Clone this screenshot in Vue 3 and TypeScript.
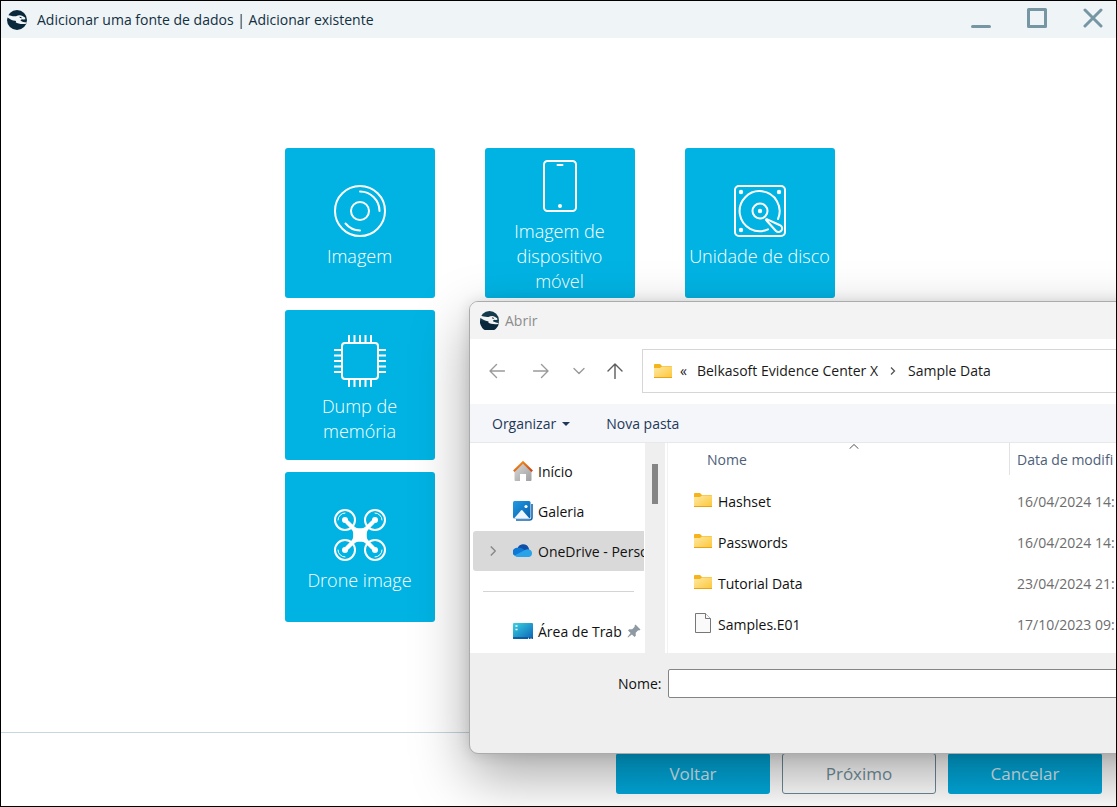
<script setup lang="ts">
import { ref } from 'vue'

interface Tile {
  id: string
  label: string
  col: number
  row: number
}

interface FileEntry {
  name: string
  date: string
  kind: 'folder' | 'file'
}

const tiles: Tile[] = [
  { id: 'image', label: 'Imagem', col: 1, row: 1 },
  { id: 'mobile', label: 'Imagem de\ndispositivo\nmóvel', col: 2, row: 1 },
  { id: 'disk', label: 'Unidade de disco', col: 3, row: 1 },
  { id: 'memory', label: 'Dump de\nmemória', col: 1, row: 2 },
  { id: 'drone', label: 'Drone image', col: 1, row: 3 },
]

const files: FileEntry[] = [
  { name: 'Hashset', date: '16/04/2024 14:', kind: 'folder' },
  { name: 'Passwords', date: '16/04/2024 14:', kind: 'folder' },
  { name: 'Tutorial Data', date: '23/04/2024 21:', kind: 'folder' },
  { name: 'Samples.E01', date: '17/10/2023 09:', kind: 'file' },
]

const fileName = ref('')
const pins = [0, 1, 2, 3, 4]
const rotors = [
  { x: 11, y: 11 },
  { x: 41, y: 11 },
  { x: 11, y: 41 },
  { x: 41, y: 41 },
]
</script>

<template>
  <div class="window">
    <header class="titlebar">
      <svg class="logo" viewBox="0 0 20 20" aria-hidden="true">
        <circle cx="10" cy="10" r="10" fill="#0a283c" />
        <path d="M0 5C3 5.400 6 6.600 9 6.200C11 5.300 13.500 4.900 15.500 6L18 7.600L18.400 9.200L16.600 9.600L14.800 9.200L13.400 10.400C14.600 11.800 17.400 12 19.800 12.600L19.200 13.800C15 14.400 10.600 13.800 8.600 12.200C9.400 11.600 9.200 11 8.200 10.800C5.400 10.600 3 9 0 7.200Z" fill="#f0f5f8" />
        <path d="M12.600 7.200l2 .6" stroke="#0a283c" stroke-width="1" />
      </svg>
      <h1 class="title">Adicionar uma fonte de dados | Adicionar existente</h1>
      <div class="controls">
        <button type="button" class="control" aria-label="Minimizar">
          <svg viewBox="0 0 20 20"><path d="M1.500 18.500h17" /></svg>
        </button>
        <button type="button" class="control" aria-label="Maximizar">
          <svg viewBox="0 0 20 20"><rect x="1.500" y="1.500" width="17" height="17" /></svg>
        </button>
        <button type="button" class="control" aria-label="Fechar">
          <svg viewBox="0 0 20 20"><path d="M2 2l16 16M18 2L2 18" /></svg>
        </button>
      </div>
    </header>

    <main class="content">
      <div class="tiles">
        <button
          v-for="tile in tiles"
          :key="tile.id"
          type="button"
          class="tile"
          :class="[`col-${tile.col}`, `row-${tile.row}`]"
        >
          <svg class="tile-icon" viewBox="0 0 52 52" aria-hidden="true">
            <g v-if="tile.id === 'image'" class="line">
              <circle cx="26" cy="26" r="25" />
              <circle cx="26" cy="26" r="9" />
              <path d="M26 6.500A19.500 19.500 0 0 1 45.500 26M26 45.500A19.500 19.500 0 0 1 11.500 38.500" />
            </g>
            <g v-else-if="tile.id === 'mobile'" class="line">
              <rect x="10" y="1" width="32" height="50" rx="3.500" />
              <path d="M23.500 5h5" />
              <circle cx="26" cy="46" r="2" class="solid" />
            </g>
            <g v-else-if="tile.id === 'disk'" class="line">
              <rect x="1" y="1" width="50" height="50" rx="4" />
              <path d="M44 34A20 20 0 1 0 34 44.300" />
              <circle cx="26" cy="26" r="7.500" />
              <circle cx="26" cy="26" r="2.200" class="solid" />
              <path d="M32.500 35.500C31.500 34.800 32 34 33.200 34.300L45.500 40A3.600 3.600 0 1 1 42 46Z" />
              <circle cx="7" cy="7" r="2.200" class="solid" />
              <circle cx="45" cy="7" r="2.200" class="solid" />
              <circle cx="7" cy="45" r="2.200" class="solid" />
            </g>
            <g v-else-if="tile.id === 'memory'" class="line flat">
              <rect x="8" y="8" width="36" height="36" rx="3" />
              <path v-for="p in pins" :key="p" :d="`M${15 + p * 5.5} 0v8M${15 + p * 5.5} 44v8M0 ${15 + p * 5.5}h8M44 ${15 + p * 5.5}h8`" />
            </g>
            <g v-else class="line">
              <g v-for="r in rotors" :key="`${r.x}-${r.y}`">
                <circle :cx="r.x" :cy="r.y" r="10" />
                <circle :cx="r.x" :cy="r.y" r="3" class="solid" />
              </g>
              <path class="thin" d="M4 11A7 7 0 0 1 11 4M48 11A7 7 0 0 0 41 4M4 41A7 7 0 0 0 11 48M48 41A7 7 0 0 1 41 48" />
              <path class="arms" d="M11 11L41 41M41 11L11 41" />
              <path class="fill" d="M15 12.500L20.500 18C22.500 19.800 29.500 19.800 31.500 18L37 12.500L39.500 15L34 20.500C32.400 22.500 32.400 29.500 34 31.500L39.500 37L37 39.500L31.500 34C29.500 32.400 22.500 32.400 20.500 34L15 39.500L12.500 37L18 31.500C19.600 29.500 19.600 22.500 18 20.500L12.500 15Z" />
            </g>
          </svg>
          <span class="tile-label">{{ tile.label }}</span>
        </button>
      </div>
    </main>

    <footer class="footer">
      <button type="button" class="action">Voltar</button>
      <button type="button" class="action outline">Próximo</button>
      <button type="button" class="action">Cancelar</button>
    </footer>

    <section class="dialog" role="dialog" aria-labelledby="dialog-title">
      <header class="dialog-title">
        <svg class="logo" viewBox="0 0 20 20" aria-hidden="true">
          <circle cx="10" cy="10" r="10" fill="#123a4c" />
          <path d="M0 10.500A10 10 0 0 0 20 12Z" fill="#0a283c" />
          <path d="M0 5C3 5.400 6 6.600 9 6.200C11 5.300 13.500 4.900 15.500 6L18 7.600L18.400 9.200L16.600 9.600L14.800 9.200L13.400 10.400C14.600 11.800 17.400 12 19.800 12.600L19.200 13.800C15 14.400 10.600 13.800 8.600 12.200C9.400 11.600 9.200 11 8.200 10.800C5.400 10.600 3 9 0 7.200Z" fill="#f3f3f3" />
          <path d="M12.600 7.200l2 .6" stroke="#0a283c" stroke-width="1" />
        </svg>
        <h2 id="dialog-title">Abrir</h2>
      </header>

      <nav class="navbar">
        <button type="button" class="nav-btn" aria-label="Voltar">
          <svg viewBox="0 0 16 16"><path d="M15.500 8H1M7.500 1.500L1 8l6.500 6.500" /></svg>
        </button>
        <button type="button" class="nav-btn forward" aria-label="Avançar">
          <svg viewBox="0 0 16 16"><path d="M.5 8H15M8.500 1.500L15 8l-6.500 6.500" /></svg>
        </button>
        <button type="button" class="nav-btn recent" aria-label="Locais recentes">
          <svg viewBox="0 0 16 16"><path d="M3 5.500L8 10.500l5-5" /></svg>
        </button>
        <button type="button" class="nav-btn up" aria-label="Acima">
          <svg viewBox="0 0 16 16"><path d="M8 15.500V1M1 8l7-7 7 7" /></svg>
        </button>
        <div class="address">
          <svg class="folder" viewBox="0 0 18 14" aria-hidden="true">
            <defs>
              <linearGradient id="folder-fill" x1="0" y1="0" x2="1" y2="1">
                <stop offset="0" stop-color="#ffe9a6" />
                <stop offset="1" stop-color="#fcc737" />
              </linearGradient>
            </defs>
            <path d="M0 1a1 1 0 0 1 1-1h5l2 2h9a1 1 0 0 1 1 1v3H0z" fill="#f5b41d" />
            <path d="M0 4h6l2-1.500h10V13a1 1 0 0 1-1 1H1a1 1 0 0 1-1-1z" fill="url(#folder-fill)" />
            <path d="M0 13.500h18" stroke="#e8a318" />
          </svg>
          <span class="chevrons">«</span>
          <a href="#" class="crumb">Belkasoft Evidence Center X</a>
          <svg class="crumb-sep" viewBox="0 0 6 8" aria-hidden="true"><path d="M1 .5L4.500 4L1 7.500" /></svg>
          <a href="#" class="crumb">Sample Data</a>
        </div>
      </nav>

      <div class="toolbar">
        <button type="button" class="tool">
          Organizar
          <svg class="caret" viewBox="0 0 8 4" aria-hidden="true"><path d="M0 0h8L4 4z" /></svg>
        </button>
        <button type="button" class="tool">Nova pasta</button>
      </div>

      <div class="browser">
        <ul class="places">
          <li>
            <button type="button" class="place">
              <svg class="place-icon" viewBox="0 0 20 20" aria-hidden="true">
                <defs>
                  <linearGradient id="roof" x1="0" y1="0" x2="1" y2="1">
                    <stop offset="0" stop-color="#f79a1c" />
                    <stop offset="1" stop-color="#cf3f12" />
                  </linearGradient>
                  <linearGradient id="wall" x1="0" y1="0" x2="1" y2="1">
                    <stop offset="0" stop-color="#d9d9d9" />
                    <stop offset="1" stop-color="#9f9f9f" />
                  </linearGradient>
                </defs>
                <path d="M1.500 9.500L10 2l8.500 7.500V19a1 1 0 0 1-1 1H13v-7H7v7H2.500a1 1 0 0 1-1-1z" fill="url(#wall)" />
                <path d="M.8 10.200L10 1.300l9.200 8.900" fill="none" stroke="url(#roof)" stroke-width="2.200" />
              </svg>
              <span class="place-name">Início</span>
            </button>
          </li>
          <li>
            <button type="button" class="place">
              <svg class="place-icon" viewBox="0 0 20 20" aria-hidden="true">
                <defs>
                  <linearGradient id="photo" x1="0" y1="0" x2="1" y2="1">
                    <stop offset="0" stop-color="#1f9be4" />
                    <stop offset="1" stop-color="#0a5ea8" />
                  </linearGradient>
                </defs>
                <path d="M3 19h13.500a2.500 2.500 0 0 0 2.500-2.500V3" fill="none" stroke="#1768b0" stroke-width="1.600" />
                <rect width="17.500" height="17.500" rx="1.500" fill="url(#photo)" />
                <path d="M1 17.500L8 9.500a1 1 0 0 1 1.500 0L16.500 17.500z" fill="#eef7ff" />
                <circle cx="13" cy="5.500" r="1.600" fill="#fff" />
              </svg>
              <span class="place-name">Galeria</span>
            </button>
          </li>
          <li>
            <button type="button" class="place selected">
              <svg class="expand" viewBox="0 0 6 10" aria-hidden="true"><path d="M.8.5L5.300 5L.8 9.500" /></svg>
              <svg class="place-icon" viewBox="0 0 20 20" aria-hidden="true">
                <path d="M4.500 7.500a6 6 0 0 1 11-1l1 3L10 13z" fill="#0f4fa8" />
                <path d="M3.500 15.500A4.300 4.300 0 0 1 4.500 6.800c2-.4 4 .2 5.500 1.200l6 4z" fill="#0f78d4" />
                <path d="M1.500 14.500L12 9a5.500 5.500 0 0 1 4-.6 3.900 3.900 0 0 1 0 7.600H5a5 5 0 0 1-3.500-1.500z" fill="#28a3ea" />
              </svg>
              <span class="place-name">OneDrive - Perso</span>
            </button>
          </li>
          <li class="separator" role="separator"></li>
          <li>
            <button type="button" class="place">
              <svg class="place-icon" viewBox="0 0 20 20" aria-hidden="true">
                <defs>
                  <linearGradient id="desk" x1="0" y1="0" x2="1" y2="1">
                    <stop offset="0" stop-color="#38d3e0" />
                    <stop offset="1" stop-color="#0b63b8" />
                  </linearGradient>
                </defs>
                <rect y="2" width="20" height="16" rx="1" fill="url(#desk)" />
                <path d="M2.500 5h2M2.500 8.500h2" stroke="#fff" stroke-width="1.600" />
                <path d="M0 17h20" stroke="#0a4f92" stroke-width="1.500" />
                <path d="M15 17.300h1M17.500 17.300h1" stroke="#fff" />
              </svg>
              <span class="place-name">Área de Trab</span>
              <svg class="pin" viewBox="0 0 14 14" aria-hidden="true">
                <path d="M8.500.5l5 5-1.300 1-1-.2-2.500 2.500.1 3-1.300 1.200-2.600-2.600L1 13.500.5 13l3.100-3.900L1 6.500l1.200-1.300 3 .1 2.500-2.500-.2-1z" />
              </svg>
            </button>
          </li>
        </ul>
        <div class="scrollbar"><div class="thumb"></div></div>
        <div class="files">
          <table>
            <thead>
              <tr>
                <th scope="col" class="name-col">
                  Nome
                  <svg class="sort" viewBox="0 0 10 5" aria-hidden="true"><path d="M.5 4.800L5 .5l4.500 4.300" /></svg>
                </th>
                <th scope="col" class="date-col"><span>Data de modifi</span></th>
              </tr>
            </thead>
            <tbody>
              <tr v-for="file in files" :key="file.name">
                <td>
                  <div class="file">
                    <svg v-if="file.kind === 'folder'" class="folder" viewBox="0 0 18 14" aria-hidden="true">
                      <path d="M0 1a1 1 0 0 1 1-1h5l2 2h9a1 1 0 0 1 1 1v3H0z" fill="#f5b41d" />
                      <path d="M0 4h6l2-1.500h10V13a1 1 0 0 1-1 1H1a1 1 0 0 1-1-1z" fill="url(#folder-fill)" />
                      <path d="M0 13.500h18" stroke="#e8a318" />
                    </svg>
                    <svg v-else class="doc" viewBox="0 0 18 20" aria-hidden="true">
                      <path d="M1.500.5h10l5 5v14h-15z" />
                      <path d="M11.500.5v5h5" />
                    </svg>
                    <span>{{ file.name }}</span>
                  </div>
                </td>
                <td class="date">{{ file.date }}</td>
              </tr>
            </tbody>
          </table>
        </div>
      </div>

      <div class="name-row">
        <label for="file-name">Nome:</label>
        <input id="file-name" v-model="fileName" type="text" />
      </div>
    </section>
  </div>
</template>

<style>
body {
  margin: 0;
}
</style>

<style scoped>
* {
  box-sizing: border-box;
}

.window {
  position: relative;
  display: flex;
  flex-direction: column;
  min-height: 100vh;
  overflow: hidden;
  border: 1px solid #000;
  background: #fff;
  font-family: "Open Sans", "Noto Sans", sans-serif;
  font-size: 14px;
  line-height: 20px;
  color: #1a1a1a;
}

button {
  margin: 0;
  padding: 0;
  border: 0;
  background: none;
  font: inherit;
  color: inherit;
}

h1,
h2 {
  margin: 0;
  font-size: 14px;
  font-weight: 400;
}

svg {
  display: block;
  flex: none;
}

.titlebar {
  display: flex;
  align-items: center;
  gap: 10px;
  height: 37px;
  padding: 0 13px 0 6px;
  background: #eff4f7;
}

.logo {
  width: 20px;
  height: 20px;
}

.title {
  flex: 1;
  color: #12303f;
}

.controls {
  display: flex;
  gap: 36px;
  padding-bottom: 4px;
}

.control svg {
  width: 20px;
  height: 20px;
  fill: none;
  stroke: #7796a3;
  stroke-width: 3;
  stroke-linecap: round;
  stroke-linejoin: round;
}

.content {
  flex: 1;
  padding: 110px 0 0 2px;
}

.tiles {
  display: grid;
  grid-template-columns: repeat(3, 150px);
  grid-auto-rows: 150px;
  gap: 12px 50px;
  justify-content: center;
}

.tile {
  display: flex;
  flex-direction: column;
  align-items: center;
  justify-content: center;
  gap: 7px;
  padding-top: 8px;
  border-radius: 3px;
  background: #00b3e3;
  color: #fff;
  font-size: 18px;
  font-weight: 300;
  line-height: 25px;
}

.tile-label {
  white-space: pre-line;
}

.col-1 { grid-column: 1; }
.col-2 { grid-column: 2; }
.col-3 { grid-column: 3; }
.row-1 { grid-row: 1; }
.row-2 { grid-row: 2; }
.row-3 { grid-row: 3; }

.tile-icon {
  width: 52px;
  height: 52px;
}

.line {
  fill: none;
  stroke: #fff;
  stroke-width: 2;
  stroke-linecap: round;
  stroke-linejoin: round;
}

.flat {
  stroke-linecap: butt;
}

.solid,
.fill {
  fill: #fff;
  stroke: none;
}

.line .thin {
  stroke-width: 1;
}

.line .arms {
  stroke-width: 4;
}

.footer {
  display: flex;
  justify-content: flex-end;
  gap: 12px;
  padding: 20px 14px 12px;
  border-top: 1px solid #c5d6de;
}

.action {
  width: 154px;
  height: 41px;
  border-radius: 3px;
  background: #00a9dc;
  color: #dcebf2;
  font-size: 17px;
}

.outline {
  border: 1px solid #6c8a97;
  background: transparent;
  color: #73909c;
}

.dialog {
  position: absolute;
  top: 300px;
  left: 468px;
  right: -60px;
  overflow: hidden;
  border: 1px solid #a9abac;
  border-radius: 9px;
  background: #efefef;
  box-shadow: 0 22px 56px rgba(0, 0, 0, 0.34), 0 1px 14px rgba(0, 0, 0, 0.12);
}

.dialog-title {
  display: flex;
  align-items: center;
  gap: 6px;
  height: 37px;
  padding-left: 10px;
  background: #f3f3f3;
  color: #8c8c8c;
}

.dialog-title .logo {
  width: 19px;
  height: 19px;
}

.navbar {
  display: flex;
  align-items: center;
  height: 65px;
  padding: 0 0 2px 19px;
  background: #fff;
}

.nav-btn svg {
  width: 16px;
  height: 16px;
  fill: none;
  stroke: #9a9a9a;
  stroke-width: 1.4;
  stroke-linecap: round;
  stroke-linejoin: round;
}

.forward {
  margin-left: 28px;
}

.recent {
  margin-left: 22px;
}

.up {
  margin-left: 20px;
}

.nav-btn.up svg {
  stroke: #5c5c5c;
}

.address {
  display: flex;
  flex: 1;
  align-items: center;
  height: 44px;
  margin-left: 19px;
  padding-left: 11px;
  border: 1px solid #d6d6d6;
  white-space: nowrap;
}

.folder {
  width: 18px;
  height: 14px;
}

.chevrons {
  margin: 0 10px 0 8px;
}

.crumb {
  color: #1a1a1a;
  text-decoration: none;
}

.crumb-sep {
  width: 6px;
  height: 8px;
  margin: 0 12px;
  fill: none;
  stroke: #555;
  stroke-width: 1.3;
}

.toolbar {
  display: flex;
  align-items: center;
  gap: 36px;
  height: 39px;
  padding: 1px 0 0 22px;
  border-bottom: 1px solid #e6e8ea;
  background: #f4f6f9;
  color: #1e395b;
}

.tool {
  display: flex;
  align-items: center;
  gap: 6px;
}

.caret {
  width: 8px;
  height: 4px;
  fill: #1e395b;
}

.browser {
  display: flex;
  height: 210px;
  background: #fff;
}

.places {
  width: 175px;
  margin: 0;
  padding: 8px 1px 0 3px;
  list-style: none;
  overflow: hidden;
  color: #111;
}

.place {
  display: flex;
  align-items: center;
  gap: 5px;
  width: 100%;
  height: 40px;
  padding-left: 40px;
  overflow: hidden;
  border-radius: 3px 0 0 3px;
  white-space: nowrap;
}

.selected {
  gap: 0;
  padding-left: 17px;
  background: #d9d9d9;
}

.selected .place-name {
  padding-left: 5px;
}

.place-icon {
  width: 20px;
  height: 20px;
}

.place-name {
  padding-top: 1px;
}

.expand {
  width: 6px;
  height: 10px;
  margin-right: 17px;
  fill: none;
  stroke: #8a8a8a;
  stroke-width: 1.5;
}

.separator {
  height: 40px;
  padding: 20px 10px 0;
}

.separator::before {
  content: "";
  display: block;
  border-top: 1px solid #d4d4d4;
}

.pin {
  width: 14px;
  height: 14px;
  fill: #8d9aa3;
}

.scrollbar {
  width: 20px;
  padding: 21px 7px 0;
  background: #efefef;
}

.thumb {
  height: 40px;
  background: #858585;
}

.files {
  flex: 1;
  margin-left: 2px;
  overflow: hidden;
  border-left: 1px solid #f2f2f2;
}

table {
  width: 100%;
  border-spacing: 0;
  table-layout: fixed;
}

th {
  position: relative;
  height: 38px;
  padding: 7px 0 0 39px;
  color: #4c607a;
  font-weight: 400;
  text-align: left;
  vertical-align: top;
  white-space: nowrap;
}

.name-col {
  width: 341px;
}

.sort {
  position: absolute;
  top: 1px;
  left: 181px;
  width: 10px;
  height: 5px;
  fill: none;
  stroke: #555;
}

.date-col {
  padding: 0;
}

.date-col span {
  display: block;
  height: 32px;
  padding: 7px 0 0 7px;
  border-left: 1px solid #e2e2e2;
}

td {
  height: 41px;
  padding: 0;
  color: #111;
}

.file {
  display: flex;
  align-items: center;
  gap: 6px;
  padding-left: 26px;
}

.file svg {
  margin-bottom: 3px;
}

.doc {
  width: 18px;
  height: 20px;
  fill: #fafafa;
  stroke: #777;
}

td.date {
  padding-left: 8px;
  color: #6d6d6d;
  white-space: nowrap;
}

.name-row {
  display: flex;
  align-items: center;
  gap: 7px;
  height: 100px;
  padding: 0 0 39px 148px;
  color: #111;
}

.name-row input {
  flex: 1;
  height: 29px;
  padding: 0 6px;
  border: 1px solid #858585;
  border-radius: 2px;
  background: #fff;
  font: inherit;
}
</style>
